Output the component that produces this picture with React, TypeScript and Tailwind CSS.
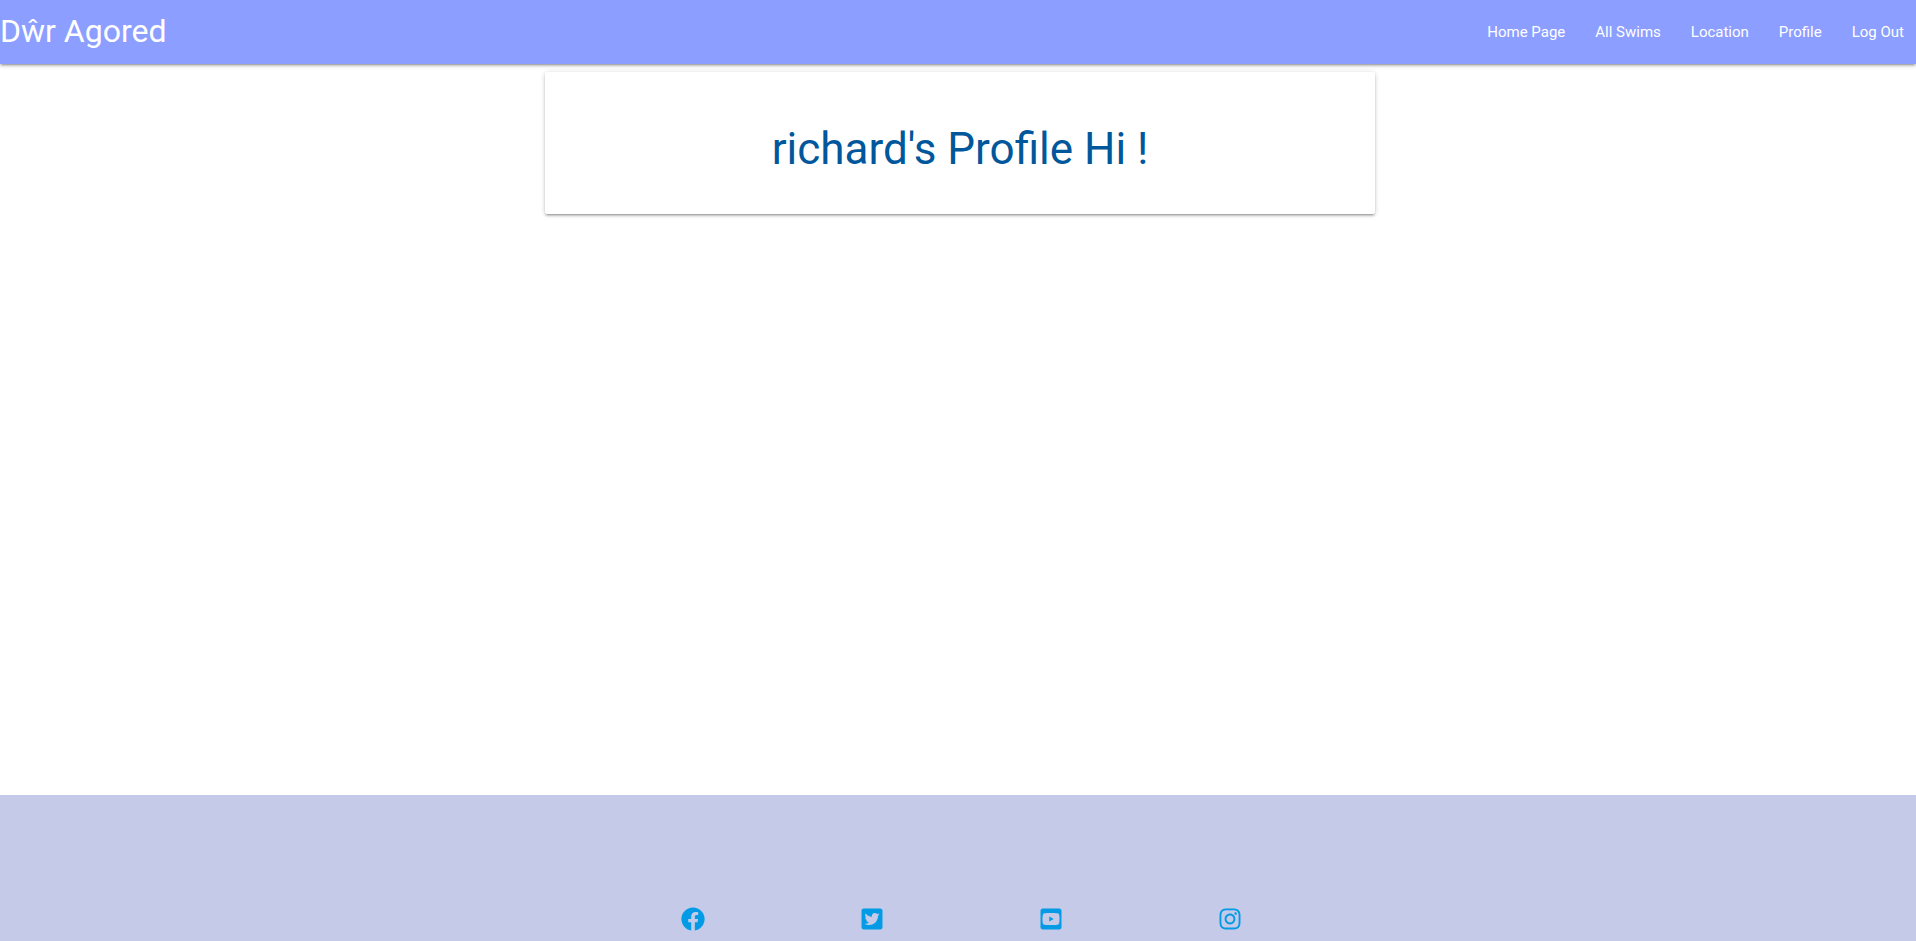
import { FaFacebook, FaTwitterSquare, FaYoutubeSquare, FaInstagram } from "react-icons/fa";

const navLinks = ["Home Page", "All Swims", "Location", "Profile", "Log Out"];
const socials = [
  { label: "Facebook", Icon: FaFacebook },
  { label: "Twitter", Icon: FaTwitterSquare },
  { label: "YouTube", Icon: FaYoutubeSquare },
  { label: "Instagram", Icon: FaInstagram },
];

const elevation =
  "shadow-[0_2px_2px_0_rgba(0,0,0,0.14),0_3px_1px_-2px_rgba(0,0,0,0.12),0_1px_5px_0_rgba(0,0,0,0.2)]";

export default function App() {
  return (
    <div className="flex min-h-screen flex-col bg-white font-['Roboto',sans-serif]">
      <nav className={`flex h-16 items-center justify-between bg-[#8c9eff] text-white ${elevation}`}>
        <a href="#" className="pb-0.5 text-[32px] leading-12">Dŵr Agored</a>
        <ul className="flex gap-[30px] pr-3">
          {navLinks.map((name) => (
            <li key={name}>
              <a href="#" className="block text-[15px] leading-16">{name}</a>
            </li>
          ))}
        </ul>
      </nav>
      <main className="grow pl-1">
        <section className={`mx-auto mt-2 w-[830px] max-w-full rounded-xs bg-white px-6 pt-[53px] pb-[41px] ${elevation}`}>
          <h1 className="text-center text-[44px] leading-12 text-[#01579b]">richard's Profile Hi !</h1>
        </section>
      </main>
      <footer className="bg-[#c5cae9] pt-28 pb-[10px] pl-1.5">
        <ul className="mx-auto grid max-w-[716px] grid-cols-4">
          {socials.map(({ label, Icon }) => (
            <li key={label} className="flex justify-center">
              <a href="#" aria-label={label} className="text-[#039be5]">
                <Icon size={24} />
              </a>
            </li>
          ))}
        </ul>
      </footer>
    </div>
  );
}
